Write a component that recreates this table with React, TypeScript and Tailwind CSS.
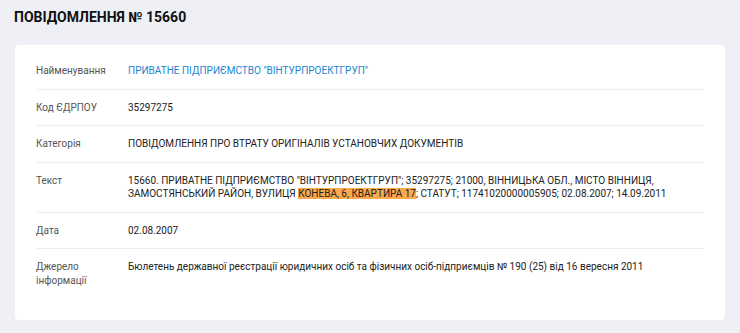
import React from 'react';

type Row = {
  label: React.ReactNode;
  value: React.ReactNode;
};

const rows: Row[] = [
  {
    label: 'Найменування',
    value: (
      <a href="#" className="text-[#1a85cf]">
        ПРИВАТНЕ ПІДПРИЄМСТВО "ВІНТУРПРОЕКТГРУП"
      </a>
    ),
  },
  { label: 'Код ЄДРПОУ', value: '35297275' },
  { label: 'Категорія', value: 'ПОВІДОМЛЕННЯ ПРО ВТРАТУ ОРИГІНАЛІВ УСТАНОВЧИХ ДОКУМЕНТІВ' },
  {
    label: 'Текст',
    value: (
      <>
        15660. ПРИВАТНЕ ПІДПРИЄМСТВО "ВІНТУРПРОЕКТГРУП"; 35297275; 21000, ВІННИЦЬКА ОБЛ., МІСТО ВІННИЦЯ,
        <br />
        ЗАМОСТЯНСЬКИЙ РАЙОН, ВУЛИЦЯ <mark className="bg-[#fda84c] text-[#222]">КОНЕВА, 6, КВАРТИРА 17</mark>; СТАТУТ;
        11741020000005905; 02.08.2007; 14.09.2011
      </>
    ),
  },
  { label: 'Дата', value: '02.08.2007' },
  {
    label: (
      <>
        Джерело
        <br />
        інформації
      </>
    ),
    value: 'Бюлетень державної реєстрації юридичних осіб та фізичних осіб-підприємців № 190 (25) від 16 вересня 2011',
  },
];

export default function App() {
  return (
    <div className="min-h-[333px] bg-[#eff0f5] px-[15px] pt-[8px] pb-[13px] font-['Roboto',sans-serif]">
      <h1 className="text-[14px] leading-[18px] font-bold text-[#111] -ml-px">ПОВІДОМЛЕННЯ № 15660</h1>

      <div className="mt-[19px] rounded bg-white px-[21px] pt-[8px] pb-[22px]">
        {rows.map((row, i) => (
          <div
            key={i}
            className={`flex py-[11px] text-[10px] leading-[13.5px] ${
              i < rows.length - 1 ? 'border-b border-[#eceef2]' : ''
            }`}
          >
            <div className="w-[92px] shrink-0 text-[#555]">{row.label}</div>
            <div className="flex-1 text-[#222]">{row.value}</div>
          </div>
        ))}
      </div>
    </div>
  );
}
